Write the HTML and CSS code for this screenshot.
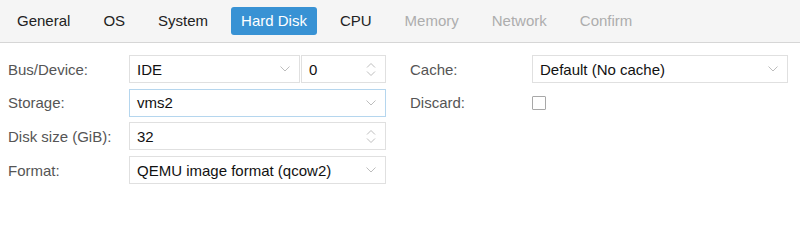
FILE: index.html
```html
<!DOCTYPE html>
<html>
<head>
<meta charset="utf-8">
<link rel="stylesheet" href="styles.css">
</head>
<body>
<div class="tabbar">
  <span class="tab">General</span>
  <span class="tab">OS</span>
  <span class="tab">System</span>
  <span class="tab active">Hard Disk</span>
  <span class="tab">CPU</span>
  <span class="tab disabled">Memory</span>
  <span class="tab disabled">Network</span>
  <span class="tab disabled">Confirm</span>
</div>
<div class="form">
  <div class="col col-left">
    <div class="row">
      <label class="label">Bus/Device:</label>
      <div class="fieldgroup">
        <div class="field combo bus">
          <span class="value">IDE</span>
          <svg class="chev" width="10" height="6" viewBox="0 0 10 6"><path d="M0.5 0.5 L5 5 L9.5 0.5" fill="none" stroke="#bdbdbd" stroke-width="1"/></svg>
        </div>
        <div class="field spin dev">
          <span class="value">0</span>
          <svg class="spinner" width="10" height="13" viewBox="0 0 10 13"><path d="M1 4.5 L5 0.5 L9 4.5 M1 8.5 L5 12.5 L9 8.5" fill="none" stroke="#bdbdbd" stroke-width="1"/></svg>
        </div>
      </div>
    </div>
    <div class="row">
      <label class="label">Storage:</label>
      <div class="field combo focus">
        <span class="value">vms2</span>
        <svg class="chev" width="10" height="6" viewBox="0 0 10 6"><path d="M0.5 0.5 L5 5 L9.5 0.5" fill="none" stroke="#bdbdbd" stroke-width="1"/></svg>
      </div>
    </div>
    <div class="row">
      <label class="label">Disk size (GiB):</label>
      <div class="field spin">
        <span class="value">32</span>
        <svg class="spinner" width="10" height="13" viewBox="0 0 10 13"><path d="M1 4.5 L5 0.5 L9 4.5 M1 8.5 L5 12.5 L9 8.5" fill="none" stroke="#bdbdbd" stroke-width="1"/></svg>
      </div>
    </div>
    <div class="row">
      <label class="label">Format:</label>
      <div class="field combo">
        <span class="value">QEMU image format (qcow2)</span>
        <svg class="chev" width="10" height="6" viewBox="0 0 10 6"><path d="M0.5 0.5 L5 5 L9.5 0.5" fill="none" stroke="#bdbdbd" stroke-width="1"/></svg>
      </div>
    </div>
  </div>
  <div class="col col-right">
    <div class="row">
      <label class="label">Cache:</label>
      <div class="field combo">
        <span class="value">Default (No cache)</span>
        <svg class="chev" width="10" height="6" viewBox="0 0 10 6"><path d="M0.5 0.5 L5 5 L9.5 0.5" fill="none" stroke="#bdbdbd" stroke-width="1"/></svg>
      </div>
    </div>
    <div class="row">
      <label class="label">Discard:</label>
      <div class="checkwrap"><span class="checkbox"></span></div>
    </div>
  </div>
</div>
</body>
</html>
```

FILE: styles.css
```css
html, body {
  margin: 0;
  padding: 0;
  background: #ffffff;
  font-family: "Liberation Sans", Arial, sans-serif;
  font-size: 15px;
  color: #222;
}

.tabbar {
  height: 42px;
  background: #f5f5f5;
  border-bottom: 1px solid #d6d6d6;
  display: flex;
  align-items: center;
  padding-left: 7px;
  gap: 13px;
  box-sizing: content-box;
}

.tab {
  height: 28px;
  line-height: 28px;
  padding: 0 10px;
  border-radius: 3px;
  color: #222;
  white-space: nowrap;
}

.tab.active {
  background: #3892d4;
  color: #fff;
}

.tab.disabled {
  color: #adadad;
}

.form {
  display: flex;
  padding: 12px 0 0 8px;
}

.col {
  display: flex;
  flex-direction: column;
  gap: 5.7px;
}

.col-left {
  width: 378px;
}

.col-right {
  margin-left: 24px;
}

.row {
  display: flex;
  align-items: center;
  height: 28px;
}

.label {
  color: #555;
  width: 121px;
  flex: none;
}

.col-right .label {
  width: 122px;
}

.fieldgroup {
  display: flex;
  gap: 1px;
}

.field {
  box-sizing: border-box;
  height: 28px;
  width: 257px;
  border: 1px solid #e0e0e0;
  background: #fff;
  display: flex;
  align-items: center;
  justify-content: space-between;
  padding: 0 9px 0 7px;
  color: #111;
}

.field.focus {
  border-color: #b5d6ee;
}

.field.bus {
  width: 171px;
}

.field.dev {
  width: 85px;
}

.col-right .field {
  width: 256px;
}

.field .value {
  white-space: nowrap;
}

.chev {
  flex: none;
}

.spinner {
  flex: none;
}

.checkwrap {
  display: flex;
  align-items: center;
}

.checkbox {
  display: block;
  box-sizing: border-box;
  width: 14px;
  height: 14px;
  border: 1px solid #a8a8a8;
  border-radius: 1px;
  background: #fff;
}
```
